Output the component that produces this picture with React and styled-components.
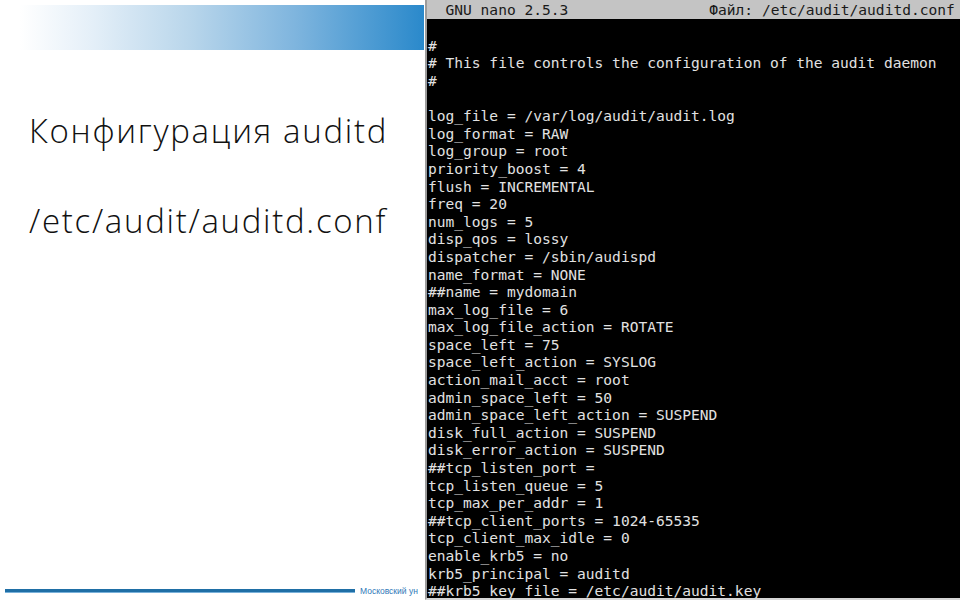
import styled, { createGlobalStyle } from 'styled-components'

const GlobalStyle = createGlobalStyle`
  html, body {
    margin: 0;
    padding: 0;
    background: #ffffff;
  }
  #root {
    width: 960px;
    height: 600px;
    overflow: hidden;
  }
`

const configLines = [
  '#',
  '# This file controls the configuration of the audit daemon',
  '#',
  '',
  'log_file = /var/log/audit/audit.log',
  'log_format = RAW',
  'log_group = root',
  'priority_boost = 4',
  'flush = INCREMENTAL',
  'freq = 20',
  'num_logs = 5',
  'disp_qos = lossy',
  'dispatcher = /sbin/audispd',
  'name_format = NONE',
  '##name = mydomain',
  'max_log_file = 6',
  'max_log_file_action = ROTATE',
  'space_left = 75',
  'space_left_action = SYSLOG',
  'action_mail_acct = root',
  'admin_space_left = 50',
  'admin_space_left_action = SUSPEND',
  'disk_full_action = SUSPEND',
  'disk_error_action = SUSPEND',
  '##tcp_listen_port = ',
  'tcp_listen_queue = 5',
  'tcp_max_per_addr = 1',
  '##tcp_client_ports = 1024-65535',
  'tcp_client_max_idle = 0',
  'enable_krb5 = no',
  'krb5_principal = auditd',
  '##krb5_key_file = /etc/audit/audit.key',
]

const App = () => {
  return (
    <Slide>
      <GlobalStyle />
      <LeftPane>
        <Banner />
        <Titles>
          <Title>Конфигурация auditd</Title>
          <Title>/etc/audit/auditd.conf</Title>
        </Titles>
        <Footer>
          <FooterLine />
          <FooterText>Московский ун</FooterText>
        </Footer>
      </LeftPane>
      <Terminal>
        <TitleBar>
          <span>{'  GNU nano 2.5.3'}</span>
          <FileName>Файл: /etc/audit/auditd.conf</FileName>
        </TitleBar>
        <Buffer>
          {configLines.map((line, i) => (
            <Line key={i}>{line || ' '}</Line>
          ))}
        </Buffer>
      </Terminal>
    </Slide>
  )
}

export default App

const Slide = styled.div`
  display: flex;
  width: 960px;
  height: 600px;
  background: #ffffff;
`

const LeftPane = styled.section`
  width: 425px;
  flex-shrink: 0;
  display: flex;
  flex-direction: column;
  overflow: hidden;
  background: #ffffff;
`

const Banner = styled.div`
  margin: 5px 1px 0 20px;
  height: 45px;
  background: linear-gradient(
    90deg,
    #ffffff 0%,
    #e4eff8 18%,
    #b9d6eb 42%,
    #7fb5de 68%,
    #2a89cb 100%
  );
`

const Titles = styled.div`
  display: flex;
  flex-direction: column;
  gap: 46px;
  padding: 59px 0 0 29px;
`

const Title = styled.h1`
  margin: 0;
  font-family: 'Open Sans', 'Noto Sans', sans-serif;
  font-weight: 300;
  font-size: 33px;
  line-height: 44px;
  letter-spacing: 1.7px;
  color: #111111;
  white-space: nowrap;
`

const Footer = styled.div`
  margin-top: auto;
  display: flex;
  align-items: center;
  gap: 5px;
  padding: 0 0 4px 5px;
`

const FooterLine = styled.div`
  width: 350px;
  height: 3px;
  background: #1f6fa6;
  border-bottom: 1px solid #79b1da;
  flex-shrink: 0;
`

const FooterText = styled.span`
  font-family: 'Liberation Sans', Arial, sans-serif;
  font-size: 8.5px;
  color: #2f78b8;
  white-space: nowrap;
`

const Terminal = styled.section`
  flex: 1;
  display: flex;
  flex-direction: column;
  background: #000000;
  border-left: 2px solid #9c9c9c;
  border-bottom: 2px solid #d6d6d6;
  overflow: hidden;
  font-family: 'DejaVu Sans Mono', 'Liberation Mono', monospace;
  font-size: 14.57px;
  color: #e2e2e2;
`

const TitleBar = styled.div`
  display: flex;
  height: 19px;
  line-height: 19px;
  padding-left: 1px;
  background: #c4c4c4;
  color: #1a1a1a;
  white-space: pre;
`

const FileName = styled.span`
  margin-left: 141px;
`

const Buffer = styled.div`
  padding: 17.8px 0 0 1px;
`

const Line = styled.div`
  height: 17.6px;
  line-height: 17.6px;
  white-space: pre;
`
